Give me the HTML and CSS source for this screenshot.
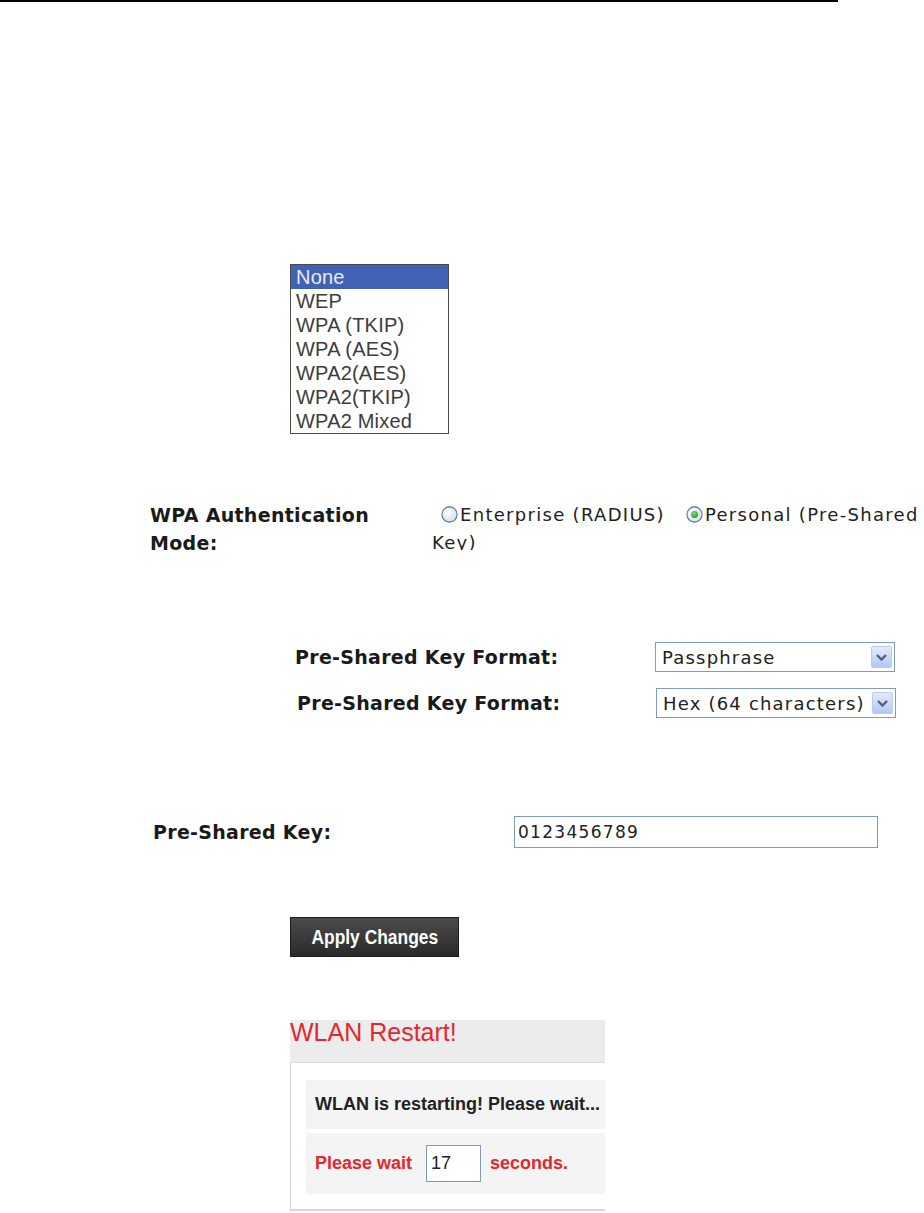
FILE: index.html
```html
<!DOCTYPE html>
<html>
<head>
<meta charset="utf-8">
<link rel="stylesheet" href="styles.css">
</head>
<body>
<div class="topline"></div>

<div class="listbox">
  <div class="opt sel">None</div>
  <div class="opt">WEP</div>
  <div class="opt">WPA (TKIP)</div>
  <div class="opt">WPA (AES)</div>
  <div class="opt">WPA2(AES)</div>
  <div class="opt">WPA2(TKIP)</div>
  <div class="opt">WPA2 Mixed</div>
</div>

<div class="auth">
  <div class="auth-label">WPA Authentication<br>Mode:</div>
  <div class="auth-opts"><svg class="radio" width="17" height="17" viewBox="0 0 17 17"><defs><radialGradient id="rg1" cx="0.35" cy="0.35" r="0.7"><stop offset="0" stop-color="#ffffff"/><stop offset="1" stop-color="#d6dee8"/></radialGradient></defs><circle cx="8.5" cy="8.5" r="7.6" fill="url(#rg1)" stroke="#4f74a0" stroke-width="1.1"/></svg>Enterprise (RADIUS)<span class="gap"></span><svg class="radio" width="17" height="17" viewBox="0 0 17 17"><defs><radialGradient id="rg2" cx="0.35" cy="0.35" r="0.7"><stop offset="0" stop-color="#ffffff"/><stop offset="1" stop-color="#d6dee8"/></radialGradient><radialGradient id="dot" cx="0.4" cy="0.35" r="0.7"><stop offset="0" stop-color="#7fe07f"/><stop offset="1" stop-color="#1d9a1d"/></radialGradient></defs><circle cx="8.5" cy="8.5" r="7.6" fill="url(#rg2)" stroke="#4f74a0" stroke-width="1.1"/><circle cx="8.5" cy="8.5" r="3.4" fill="url(#dot)"/></svg>Personal (Pre-Shared<br>Key)</div>
</div>

<div class="fmt-row fmt1">
  <div class="fmt-label">Pre-Shared Key Format:</div>
  <div class="select"><span>Passphrase</span><span class="arrow"><svg width="13" height="9" viewBox="0 0 13 9"><path d="M2 2 L6.5 6.5 L11 2" fill="none" stroke="#4d6185" stroke-width="2.4"/></svg></span></div>
</div>
<div class="fmt-row fmt2">
  <div class="fmt-label">Pre-Shared Key Format:</div>
  <div class="select"><span>Hex (64 characters)</span><span class="arrow"><svg width="13" height="9" viewBox="0 0 13 9"><path d="M2 2 L6.5 6.5 L11 2" fill="none" stroke="#4d6185" stroke-width="2.4"/></svg></span></div>
</div>

<div class="psk">
  <div class="psk-label">Pre-Shared Key:</div>
  <div class="psk-input">0123456789</div>
</div>

<button class="apply"><span class="apply-text">Apply Changes</span></button>

<div class="panel">
  <div class="panel-head">WLAN Restart!</div>
  <div class="panel-body">
    <div class="prow prow1">WLAN is restarting! Please wait...</div>
    <div class="prow prow2">Please wait<span class="count">17</span>seconds.</div>
  </div>
</div>
</body>
</html>
```

FILE: styles.css
```css
body {
  margin: 0;
  background: #fff;
  font-family: "DejaVu Sans", Verdana, sans-serif;
  color: #1a1a1a;
  overflow: hidden;
}

.topline {
  width: 838px;
  height: 2px;
  background: #000;
}

.listbox {
  margin: 262px 0 0 290px;
  width: 157px;
  border: 1px solid #4a4a4a;
  font-family: "Liberation Sans", Arial, sans-serif;
  font-size: 20px;
  letter-spacing: 0.2px;
  color: #3c3c3c;
}

.opt {
  height: 24px;
  line-height: 24px;
  padding-left: 5px;
}

.opt.sel {
  background: #4262b6;
  color: #e8ecf6;
}

.auth {
  display: flex;
  margin-top: 67px;
}

.auth-label {
  margin-left: 150px;
  width: 282px;
  font-weight: bold;
  font-size: 19px;
  letter-spacing: 0.3px;
  line-height: 28px;
}

.auth-opts {
  width: 492px;
  height: 49px;
  overflow: hidden;
  font-size: 18px;
  letter-spacing: 1.3px;
  line-height: 28px;
  text-indent: 9px;
  white-space: nowrap;
  color: #222;
}

.radio {
  vertical-align: -2px;
  margin-right: 2px;
}

.gap {
  display: inline-block;
  width: 21px;
}

.fmt-row {
  display: flex;
  align-items: center;
}

.fmt1 {
  margin: 85px 0 0 295px;
}

.fmt2 {
  margin: 16px 0 0 297px;
}

.fmt-label {
  width: 360px;
  font-weight: bold;
  font-size: 19px;
  letter-spacing: 0.3px;
}

.fmt2 .fmt-label {
  width: 359px;
}

.select {
  box-sizing: border-box;
  width: 240px;
  height: 30px;
  border: 1px solid #7f9db9;
  display: flex;
  align-items: center;
  justify-content: space-between;
  padding-left: 6px;
  font-size: 18px;
  letter-spacing: 1.2px;
  color: #222;
}

.arrow {
  box-sizing: border-box;
  width: 21px;
  height: 22px;
  margin-right: 2px;
  background: linear-gradient(#e2ebfe, #b4c8f4);
  border: 1px solid #b9cbf3;
  border-radius: 2px;
  display: flex;
  align-items: center;
  justify-content: center;
}

.psk {
  display: flex;
  align-items: center;
  margin: 98px 0 0 153px;
}

.psk-label {
  width: 361px;
  font-weight: bold;
  font-size: 19px;
  letter-spacing: 0.3px;
}

.psk-input {
  box-sizing: border-box;
  width: 364px;
  height: 32px;
  border: 1px solid #7f9db9;
  padding-left: 3px;
  line-height: 30px;
  font-size: 17px;
  letter-spacing: 1.3px;
  color: #222;
}

.apply {
  display: flex;
  align-items: center;
  justify-content: center;
  box-sizing: border-box;
  margin: 69px 0 0 290px;
  width: 169px;
  height: 40px;
  padding: 0;
  background: linear-gradient(#4d4b4b, #2a2929);
  border: 1px solid #1c1c1c;
  color: #fff;
  font-family: "Liberation Sans", Arial, sans-serif;
  font-weight: bold;
  font-size: 20px;
}

.apply-text {
  display: inline-block;
  transform: scaleX(0.87);
  white-space: nowrap;
}

.panel {
  margin: 63px 0 0 290px;
  width: 315px;
  font-family: "Liberation Sans", Arial, sans-serif;
}

.panel-head {
  height: 42px;
  background: #ececec;
  border-bottom: 1px solid #d9d9d9;
  color: #e5262c;
  font-size: 25px;
  line-height: 24px;
}

.panel-body {
  border-left: 1px solid #d4d4d4;
  border-bottom: 2px solid #d8d8d8;
  padding: 17px 0 15px 15px;
}

.prow {
  display: flex;
  align-items: center;
  background: #f4f4f4;
  padding-left: 9px;
  font-weight: bold;
  font-size: 18px;
}

.prow1 {
  height: 49px;
  margin-bottom: 4px;
  color: #222;
}

.prow2 {
  height: 61px;
  color: #e5262c;
}

.count {
  box-sizing: border-box;
  width: 55px;
  height: 37px;
  margin: 0 9px 0 14px;
  padding-left: 4px;
  border: 1px solid #7f9db9;
  background: #fff;
  color: #222;
  font-weight: normal;
  line-height: 35px;
}
```
